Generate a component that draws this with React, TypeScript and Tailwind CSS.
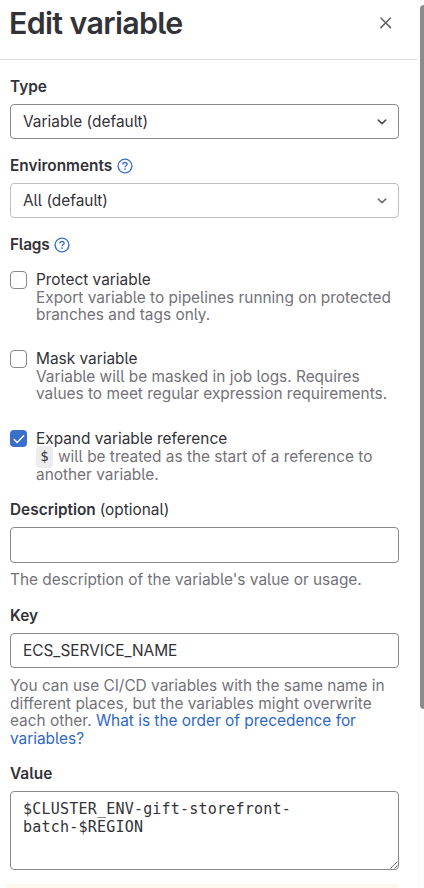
import type { ReactNode } from 'react';

function HelpIcon() {
  return (
    <svg className="h-4 w-4 text-[#3a70ca]" viewBox="0 0 16 16" fill="none" stroke="currentColor">
      <circle cx="8" cy="8" r="6.9" strokeWidth="1.4" />
      <path d="M5.9 6.5C5.9 5.2 6.8 4.5 8 4.5s2.1.7 2.1 1.8c0 1.5-2.1 1.4-2.1 2.9" strokeWidth="1.4" />
      <circle cx="8" cy="11.1" r=".9" fill="currentColor" stroke="none" />
    </svg>
  );
}

function Chevron({ color }: { color: string }) {
  return (
    <svg className={`mr-[10.5px] h-3 w-3 ${color}`} viewBox="0 0 12 12" fill="none" stroke="currentColor" strokeWidth="1.7" strokeLinecap="round" strokeLinejoin="round">
      <path d="M2.3 4.2 6 7.6l3.7-3.4" />
    </svg>
  );
}

function Label({ children, help }: { children: ReactNode; help?: boolean }) {
  return (
    <div className="flex h-[18px] items-center gap-[4.5px] whitespace-nowrap font-semibold leading-[18px] text-[#333238]">
      <span>{children}</span>
      {help && <HelpIcon />}
    </div>
  );
}

function Flag({ title, checked, children }: { title: string; checked?: boolean; children: ReactNode }) {
  return (
    <div className="flex gap-[9px]">
      {checked ? (
        <div className="flex h-[17px] w-[17px] shrink-0 items-center justify-center rounded-[4px] bg-[#3a70ca]">
          <svg className="h-3 w-3" viewBox="0 0 12 12" fill="none" stroke="white" strokeWidth="1.4" strokeLinecap="round" strokeLinejoin="round">
            <path d="m1.2 6.6 2.9 2.8 6.6-6.6" />
          </svg>
        </div>
      ) : (
        <div className="h-[18px] w-[17px] shrink-0 rounded-[4px] border border-[#89888d]" />
      )}
      <div className="whitespace-nowrap leading-[17.6px] text-[#737278]">
        <div className="text-[#333238]">{title}</div>
        {children}
      </div>
    </div>
  );
}

export default function App() {
  return (
    <div className="flex h-[888px] w-[424px] overflow-hidden bg-white font-['Inter','Noto_Sans',sans-serif] text-[15.4px] [font-feature-settings:'cv05'_1]">
      <div className="w-[417px] shrink-0">
        <header className="flex h-[60px] justify-between border-b border-[#dcdcde] pl-[9px]">
          <h1 className="mt-[5px] whitespace-nowrap text-[30.4px] font-semibold leading-[36px] tracking-[-0.65px] text-[#333238]">Edit variable</h1>
          <svg className="mr-[25px] mt-[16px] h-[13px] w-[13px] text-[#626168]" viewBox="0 0 13 13" fill="none" stroke="currentColor" strokeWidth="1.5" strokeLinecap="round">
            <path d="m1.9 2 9.6 9.6m0-9.6-9.6 9.6" />
          </svg>
        </header>
        <main className="w-[399px] pl-[10px]">
          <div className="pt-[18px]"><Label>Type</Label></div>
          <div className="mt-[8px] flex h-[35px] items-center justify-between rounded-[4px] border border-[#89888d] pl-[12px] text-[#333238]">
            <span>Variable (default)</span><Chevron color="text-[#535158]" />
          </div>
          <div className="mt-[18px]"><Label help>Environments</Label></div>
          <div className="mt-[8px] flex h-[35px] items-center justify-between rounded-[4px] border border-[#bfbfc3] pl-[12px] text-[#333238]">
            <span>All (default)</span><Chevron color="text-[#737278]" />
          </div>
          <div className="mt-[18px]"><Label help><span className="tracking-[-0.2px]">Flags</span></Label></div>
          <div className="mt-[17px] h-[79px]">
            <Flag title="Protect variable">
              <div>Export variable to pipelines running on protected</div>
              <div>branches and tags only.</div>
            </Flag>
          </div>
          <div className="h-[80px]">
            <Flag title="Mask variable">
              <div>Variable will be masked in job logs. Requires</div>
              <div>values to meet regular expression requirements.</div>
            </Flag>
          </div>
          <div className="h-[71px]">
            <Flag title="Expand variable reference" checked>
              <div className="flex h-[18.4px] items-start">
                <code className="mr-[5px] mt-[-2px] h-[22px] w-[17px] rounded-[4px] bg-[#ececef] text-center font-['DejaVu_Sans_Mono',monospace] text-[14px] leading-[20px] text-[#333238]">$</code>
                <span>will be treated as the start of a reference to</span>
              </div>
              <div>another variable.</div>
            </Flag>
          </div>
          <Label>Description <span className="font-normal">(optional)</span></Label>
          <div className="mt-[8px] h-[36px] rounded-[4px] border border-[#89888d]" />
          <div className="mt-[8px] whitespace-nowrap leading-[18px] text-[#737278]">The description of the variable's value or usage.</div>
          <div className="mt-[18px]"><Label>Key</Label></div>
          <div className="mt-[8px] flex h-[35px] items-center rounded-[4px] border border-[#89888d] pl-[12px] text-[#333238]">ECS_SERVICE_NAME</div>
          <p className="mt-[9px] h-[70px] whitespace-nowrap leading-[17.6px] text-[#737278]">
            You can use CI/CD variables with the same name in<br />
            different places, but the variables might overwrite<br />
            each other. <span className="text-[#2f68c5]">What is the order of precedence for<br />variables?</span>
          </p>
          <div className="mt-[18px]"><Label>Value</Label></div>
          <div className="mt-[8px] flex h-[79px] items-end justify-between rounded-[4px] border border-[#89888d] pl-[12px]">
            <pre className="self-start pt-[9px] font-['DejaVu_Sans_Mono',monospace] text-[15px] leading-[17.6px] tracking-[0.21px] text-[#333238]">{'$CLUSTER_ENV-gift-storefront-\nbatch-$REGION'}</pre>
            <svg className="h-[8px] w-[8px]" viewBox="0 0 8 8" stroke="#535158" strokeWidth=".8">
              <path d="m.5 7.5 7-7m-3 7 3-3" />
            </svg>
          </div>
          <div className="-ml-[5px] mt-[14px] h-[4px] bg-[#fdf9ee]" />
        </main>
      </div>
      <aside className="w-[7px] shrink-0 bg-[#fcfcfc] pl-[3px] pt-[5px]">
        <div className="h-[704px] rounded-l-[4px] bg-[#8b8b8b]" />
      </aside>
    </div>
  );
}
